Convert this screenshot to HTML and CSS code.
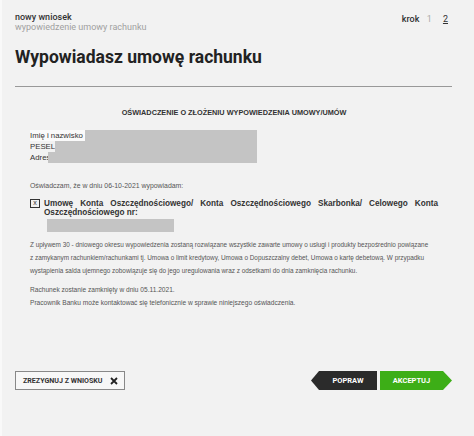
FILE: index.html
```html
<!DOCTYPE html>
<html lang="pl">
<head>
    <meta charset="UTF-8">
    <title>Wypowiedzenie umowy rachunku</title>
    <link rel="stylesheet" href="styles.css">
</head>
<body>
    <div class="page">
        <div class="top">
            <div class="crumbs">
                <div class="crumb-main">nowy wniosek</div>
                <div class="crumb-sub">wypowiedzenie umowy rachunku</div>
            </div>
            <div class="steps">
                <span class="steps-label">krok</span>
                <span class="step">1</span>
                <span class="step current">2</span>
            </div>
        </div>

        <h1 class="title">Wypowiadasz umowę rachunku</h1>

        <div class="doc">
            <div class="doc-head">OŚWIADCZENIE O ZŁOŻENIU WYPOWIEDZENIA UMOWY/UMÓW</div>

            <div class="person">
                <div class="person-row"><span class="label first">Imię i nazwisko</span><span class="redacted r1"></span></div>
                <div class="person-row"><span class="label">PESEL</span><span class="redacted r2"></span></div>
                <div class="person-row"><span class="label">Adres</span><span class="redacted r3"></span></div>
            </div>

            <p class="small intro">Oświadczam, że w dniu 06-10-2021 wypowiadam:</p>

            <div class="choice">
                <span class="check">x</span>
                <div class="choice-text">
                    <div class="choice-line">Umowę Konta Oszczędnościowego/ Konta Oszczędnościowego Skarbonka/ Celowego Konta</div>
                    <div>Oszczędnościowego nr:</div>
                    <div class="redacted account"></div>
                </div>
            </div>

            <p class="small para">Z upływem 30 - dniowego okresu wypowiedzenia zostaną rozwiązane wszystkie zawarte umowy o usługi i produkty bezpośrednio powiązane<br>z zamykanym rachunkiem/rachunkami tj. Umowa o limit kredytowy, Umowa o Dopuszczalny debet, Umowa o kartę debetową. W przypadku<br>wystąpienia salda ujemnego zobowiązuje się do jego uregulowania wraz z odsetkami do dnia zamknięcia rachunku.</p>

            <p class="small closing">Rachunek zostanie zamknięty w dniu 05.11.2021.<br>Pracownik Banku może kontaktować się telefonicznie w sprawie niniejszego oświadczenia.</p>
        </div>

        <div class="actions">
            <button class="btn-cancel">ZREZYGNUJ Z WNIOSKU
                <svg width="8" height="8" viewBox="0 0 8 8"><path d="M1 1 L7 7 M7 1 L1 7" stroke="#222" stroke-width="1.8"/></svg>
            </button>
            <div class="nav">
                <button class="btn-back">POPRAW</button>
                <button class="btn-accept">AKCEPTUJ</button>
            </div>
        </div>
    </div>
</body>
</html>
```

FILE: styles.css
```css
body {
    margin: 0;
    background: #f2f2f2;
    color: #222;
    font-family: Roboto, "Liberation Sans", sans-serif;
    box-shadow: inset 2px 0 #f9f9f9;
    min-height: 100vh;
}

.page {
    padding: 12px 22px 0 15px;
}

.top {
    display: flex;
    justify-content: space-between;
    align-items: flex-start;
}

.crumb-main {
    font-size: 9px;
    font-weight: 500;
    line-height: 10px;
    color: #333;
}

.crumb-sub {
    font-size: 9px;
    line-height: 10px;
    color: #a0a0a0;
}

.steps {
    font-size: 9px;
    line-height: 10px;
    margin: 2px 4px 0 0;
}

.steps-label {
    color: #333;
    font-weight: 500;
}

.step {
    color: #aaa;
    margin-left: 5px;
}

.step.current {
    color: #333;
    margin-left: 9px;
    text-decoration: underline;
}

.title {
    margin: 14px 0 0;
    font-size: 17.5px;
    font-weight: 700;
    line-height: 22px;
    color: #222;
    padding-bottom: 18px;
    border-bottom: 1px solid #999;
}

.doc {
    font-family: "Liberation Sans", Arial, sans-serif;
    padding: 0 14px 0 15px;
}

.doc-head {
    margin-top: 21px;
    text-align: center;
    font-size: 7.3px;
    font-weight: 700;
    line-height: 10px;
    color: #333;
}

.person {
    width: 227px;
    margin-top: 12px;
    font-size: 7.8px;
    color: #333;
}

.person-row {
    display: flex;
    height: 11px;
    line-height: 11px;
}

.label.first {
    background: #fafafa;
    padding-right: 2px;
}

.redacted {
    display: block;
    background: #c4c4c4;
}

.person-row .redacted {
    flex: 1;
}

.r3 { margin-left: -2px; }

.small {
    color: #555;
    margin: 0;
}

.intro {
    margin-top: 18px;
    font-size: 6.9px;
    line-height: 10px;
}

.choice {
    display: flex;
    gap: 4px;
    margin-top: 8px;
}

.check {
    flex: none;
    width: 8px;
    height: 7px;
    border: 1px solid #333;
    font-size: 7px;
    line-height: 6px;
    text-align: center;
    color: #333;
}

.choice-text {
    flex: 1;
    font-size: 8.2px;
    font-weight: 700;
    line-height: 9px;
    color: #333;
}

.choice-line {
    text-align: justify;
    text-align-last: justify;
}

.account {
    width: 127px;
    height: 13px;
    margin: 2px 0 0 3px;
}

.para {
    margin-top: 6px;
    font-size: 6.4px;
    line-height: 13px;
    white-space: nowrap;
}

.closing {
    margin-top: 7px;
    font-size: 6.6px;
    line-height: 12.5px;
}

.actions {
    display: flex;
    justify-content: space-between;
    align-items: center;
    margin-top: 62px;
}

button {
    font-family: Roboto, "Liberation Sans", sans-serif;
    font-size: 7.5px;
    font-weight: 700;
    border: none;
    cursor: pointer;
    height: 19px;
    padding: 0;
    white-space: nowrap;
}

.btn-cancel {
    display: flex;
    align-items: center;
    justify-content: space-between;
    width: 110px;
    padding: 0 6px 0 7px;
    background: #f7f7f7;
    border: 1px solid #888;
    color: #333;
    font-size: 7.1px;
}

.nav {
    display: flex;
    gap: 3px;
}

.btn-back {
    width: 66px;
    background: #2b2b2b;
    color: #fff;
    clip-path: polygon(8px 0, 100% 0, 100% 100%, 8px 100%, 0 50%);
    padding-left: 8px;
}

.btn-accept {
    width: 72px;
    background: #3dae17;
    color: #fff;
    clip-path: polygon(0 0, calc(100% - 9px) 0, 100% 50%, calc(100% - 9px) 100%, 0 100%);
    padding-right: 9px;
}
```
